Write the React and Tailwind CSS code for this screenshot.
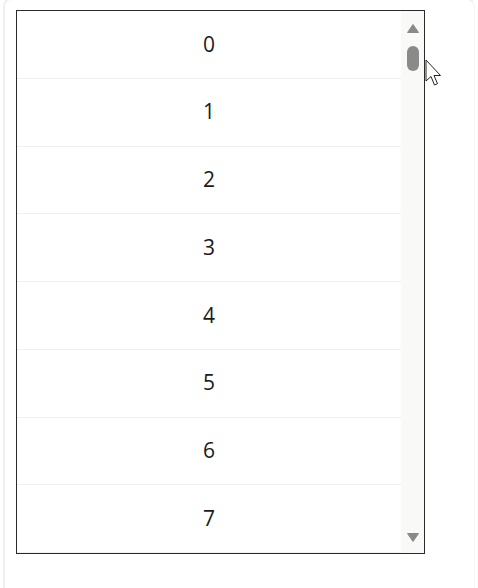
import React from "react";

export default function App() {
  const rows = [0, 1, 2, 3, 4, 5, 6, 7];
  return (
    <div className="relative w-[478px] h-[588px] bg-white overflow-hidden" style={{ fontFamily: '"Open Sans", "Noto Sans", sans-serif' }}>
      <div className="ml-[3px] mt-[-2px] w-[472px] h-[600px] border-2 border-[#efefef] border-r-[#f6f6f6] border-r rounded-lg pl-[11px] pt-[10px]">
        <div className="w-[409px] h-[544px] border border-[#2a2a2a] flex bg-white">
          <div className="flex-1 flex flex-col">
            {rows.map((n) => (
              <div key={n} className="h-[67.75px] border-b border-[#f0f0f0] flex items-center justify-center text-[21px] text-[#1a1a1a]">
                {n}
              </div>
            ))}
          </div>
          <div className="w-[23px] bg-[#f9f9f7] flex flex-col items-center pt-[13px] pb-[11px]">
            <svg width="12" height="9" viewBox="0 0 12 9"><path d="M6 0.5 L11.5 8.5 L0.5 8.5 Z" fill="#8a8a8a" strokeLinejoin="round" stroke="#8a8a8a" strokeWidth="1" /></svg>
            <div className="mt-[13px] w-[12px] h-[25px] rounded-full bg-[#8a8a8a]" />
            <div className="flex-1" />
            <svg width="12" height="9" viewBox="0 0 12 9"><path d="M0.5 0.5 L11.5 0.5 L6 8.5 Z" fill="#8a8a8a" strokeLinejoin="round" stroke="#8a8a8a" strokeWidth="1" /></svg>
          </div>
        </div>
      </div>
      <svg className="absolute left-[425px] top-[59px]" width="20" height="30" viewBox="0 0 20 30">
        <path d="M1 1 L1 22 L6 17.5 L9.5 26 L12.5 24.7 L9 16.5 L15.5 16.5 Z" fill="#ffffff" stroke="#222" strokeWidth="1" strokeLinejoin="round" />
      </svg>
    </div>
  );
}
